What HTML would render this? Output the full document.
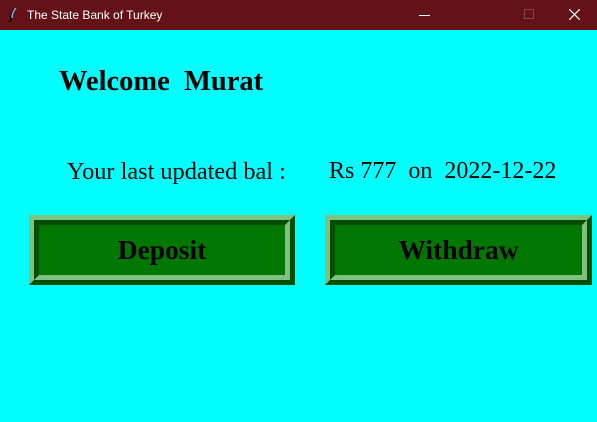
<!DOCTYPE html>
<html><head><style>
body{margin:0;width:597px;height:422px;background:#00ffff;position:relative;overflow:hidden;font-family:"Liberation Serif",serif}
.tb{position:absolute;left:0;top:0;width:597px;height:30px;background:#641218;color:#fff;font:12px "Liberation Sans",sans-serif}
.t{position:absolute;white-space:pre}
.btn{position:absolute;top:215px;height:70px;box-sizing:border-box;border:5px solid;border-color:#80c080 #004f00 #004f00 #80c080}
.in{position:absolute;inset:0;border:5px solid;border-color:#004f00 #80c080 #80c080 #004f00;background:#007800;display:flex;align-items:center;justify-content:center;font-weight:bold;font-size:27.5px;color:#000}
</style></head><body>
<div class="tb">
<svg style="position:absolute;left:8px;top:7px" width="10" height="16" viewBox="0 0 10 16"><path d="M8 1 Q3 4 3 12 L2 15" stroke="#000" fill="none" stroke-width="1.5"/><path d="M8 1 Q4 5 4 11" stroke="#7ab8f0" fill="none" stroke-width="1.5"/></svg>
<div class="t" style="left:27px;top:8px">The State Bank of Turkey</div>
<div style="position:absolute;left:419px;top:15px;width:11px;height:1px;background:#fff"></div>
<div style="position:absolute;left:524px;top:9px;width:8px;height:8px;border:1px solid #7a4a4e"></div>
<svg style="position:absolute;left:569px;top:9px" width="11" height="11"><path d="M0 0L11 11M11 0L0 11" stroke="#fff" stroke-width="1.2"/></svg>
</div>
<div class="t" style="left:59px;top:66px;font-size:28.5px;font-weight:bold">Welcome  Murat</div>
<div class="t" style="left:67px;top:158px;font-size:24.3px">Your last updated bal :</div>
<div class="t" style="left:329px;top:158px;font-size:24px">Rs 777  on  2022-12-22</div>
<div class="btn" style="left:29px;width:266px"><div class="in">Deposit</div></div>
<div class="btn" style="left:325px;width:267px"><div class="in">Withdraw</div></div>
</body></html>
